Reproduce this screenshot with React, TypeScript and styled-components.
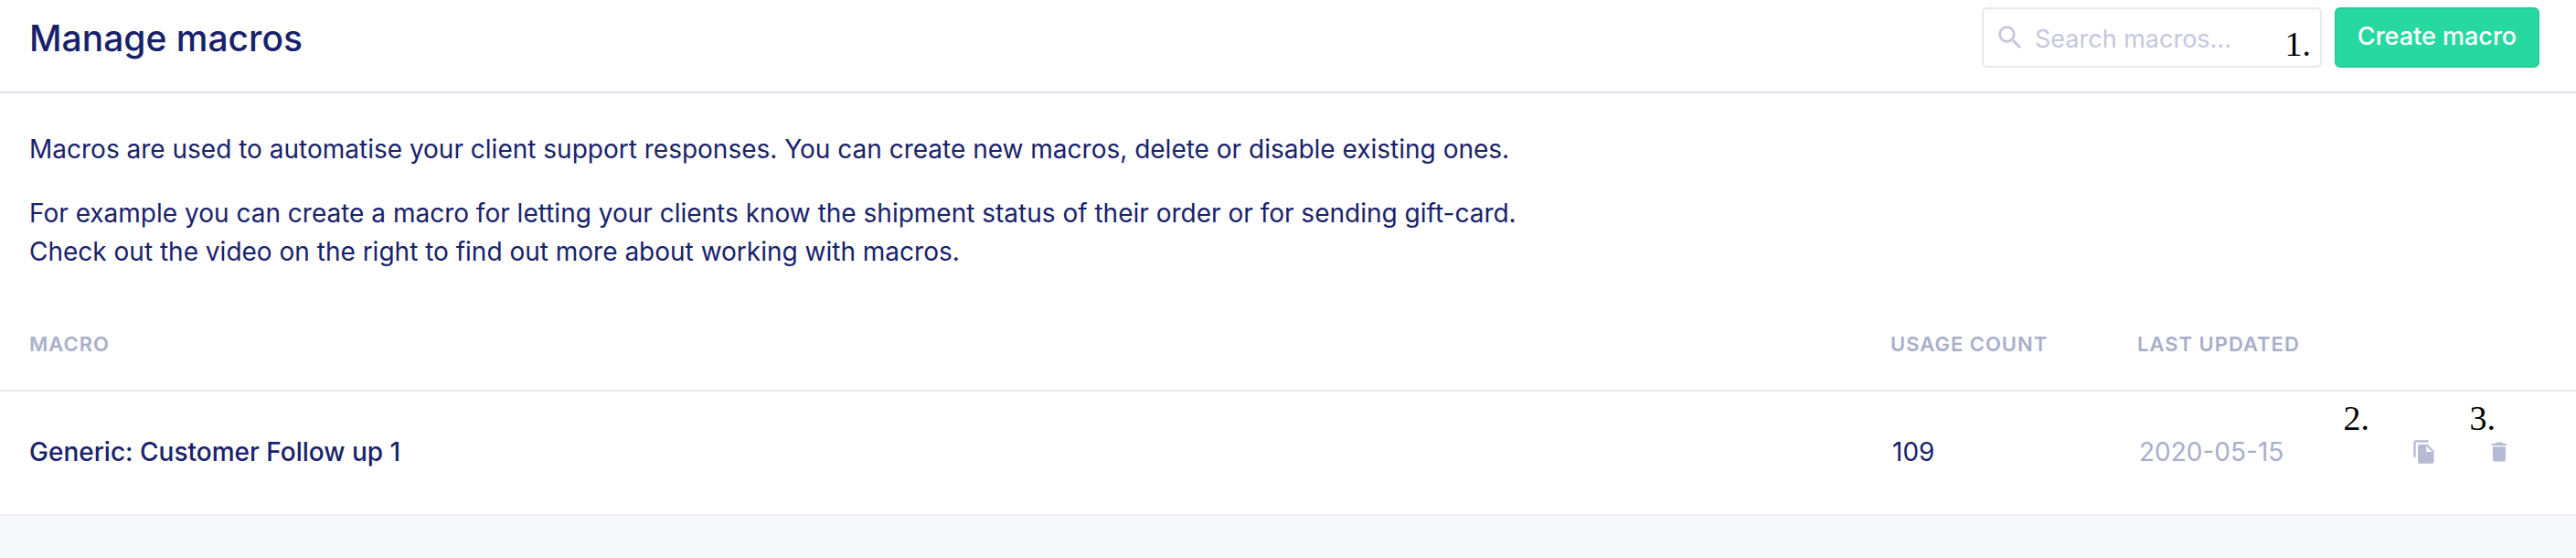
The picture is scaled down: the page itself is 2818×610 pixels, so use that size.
import React from "react";
import styled, { createGlobalStyle } from "styled-components";
import { MdDelete, MdFileCopy, MdSearch } from "react-icons/md";

const navy = "#18226b";
const muted = "#a9aecb";

const GlobalStyle = createGlobalStyle`
  *, *::before, *::after { box-sizing: border-box; }
  body {
    margin: 0;
    background: #f7f8fc;
    color: ${navy};
    font-family: Inter, "Liberation Sans", sans-serif;
    font-size: 28px;
    line-height: 42px;
  }
`;

const Panel = styled.main`
  background: #fff;
`;

const Header = styled.header`
  display: flex;
  align-items: center;
  justify-content: space-between;
  gap: 32px;
  padding: 8px 40px 26px 32px;
  border-bottom: 2px solid #e3e3f0;
`;

const Title = styled.h1`
  margin: 0;
  padding-top: 2px;
  font-size: 39px;
  line-height: 48px;
  font-weight: 500;
`;

const Tools = styled.div`
  display: flex;
  gap: 14px;
`;

const SearchBox = styled.label`
  position: relative;
  display: flex;
  align-items: center;
  gap: 10px;
  width: 372px;
  height: 66px;
  padding: 0 12px;
  border: 2px solid #e8e8ee;
  border-radius: 6px;
  color: #c5c7dc;
`;

const SearchInput = styled.input`
  flex: 1;
  min-width: 0;
  height: 100%;
  padding: 2px 0 0;
  border: 0;
  outline: 0;
  background: transparent;
  color: ${navy};
  font: inherit;
  font-size: 27px;
  &::placeholder {
    color: #c5c7dc;
    opacity: 1;
  }
`;

const CreateButton = styled.button`
  min-width: 224px;
  height: 66px;
  padding: 0 20px 2px;
  border: 2px solid #24cb94;
  border-radius: 6px;
  background: #27d9a1;
  color: #fff;
  font: inherit;
  font-size: 27px;
  font-weight: 500;
  white-space: nowrap;
`;

const Intro = styled.section`
  padding: 40px 32px 30px;
`;

const Paragraph = styled.p`
  margin: 0 0 28px;
  &:last-child { margin-bottom: 0; }
`;

const MacroTable = styled.table`
  width: 100%;
  table-layout: fixed;
  border-collapse: separate;
  border-spacing: 0;
`;

const Column = styled.col<{ $width?: number }>`
  width: ${(p) => (p.$width ? `${p.$width}px` : "auto")};
`;

const HeadCell = styled.th`
  height: 102px;
  padding: 0;
  border-bottom: 2px solid #e8e8ee;
  color: ${muted};
  font-size: 22px;
  font-weight: 600;
  letter-spacing: 1px;
  text-align: left;
  text-transform: uppercase;
  &:first-child { padding-left: 32px; }
`;

const Cell = styled.td<{ $muted?: boolean }>`
  height: 136px;
  padding: 0 0 2px 2px;
  border-bottom: 2px solid #efeff5;
  color: ${(p) => (p.$muted ? muted : navy)};
`;

const NameCell = styled.th`
  padding: 0 0 2px 32px;
  border-bottom: 2px solid #efeff5;
  font-weight: 500;
  text-align: left;
`;

const Actions = styled.div`
  display: flex;
  justify-content: flex-end;
  gap: 54px;
  padding-right: 70px;
`;

const IconButton = styled.button`
  position: relative;
  display: flex;
  padding: 0;
  border: 0;
  background: none;
  color: #b6bbd4;
`;

const Marker = styled.span<{ $right: number; $top: number }>`
  position: absolute;
  top: ${(p) => p.$top}px;
  right: ${(p) => p.$right}px;
  color: #000;
  font-family: "Liberation Serif", serif;
  font-size: 38px;
  line-height: 42px;
  pointer-events: none;
`;

const macros = [{ name: "Generic: Customer Follow up 1", count: 109, updated: "2020-05-15" }];

export default function App() {
  return (
    <>
      <GlobalStyle />
      <Panel>
        <Header>
          <Title>Manage macros</Title>
          <Tools>
            <SearchBox>
              <MdSearch size={34} aria-hidden />
              <SearchInput type="text" placeholder="Search macros..." aria-label="Search macros" />
              <Marker $right={10} $top={17}>1.</Marker>
            </SearchBox>
            <CreateButton type="button">Create macro</CreateButton>
          </Tools>
        </Header>
        <Intro>
          <Paragraph>
            Macros are used to automatise your client support responses. You can create new macros, delete or
            disable existing ones.
          </Paragraph>
          <Paragraph>
            For example you can create a macro for letting your clients know the shipment status of their order or
            for sending gift-card.
            <br />
            Check out the video on the right to find out more about working with macros.
          </Paragraph>
        </Intro>
        <MacroTable>
          <colgroup>
            <Column />
            <Column $width={270} />
            <Column $width={270} />
            <Column $width={210} />
          </colgroup>
          <thead>
            <tr>
              <HeadCell scope="col">Macro</HeadCell>
              <HeadCell scope="col">Usage count</HeadCell>
              <HeadCell scope="col">Last updated</HeadCell>
              <HeadCell as="td" />
            </tr>
          </thead>
          <tbody>
            {macros.map((macro) => (
              <tr key={macro.name}>
                <NameCell scope="row">{macro.name}</NameCell>
                <Cell>{macro.count}</Cell>
                <Cell $muted>{macro.updated}</Cell>
                <Cell>
                  <Actions>
                    <IconButton type="button" aria-label="Duplicate macro">
                      <MdFileCopy size={28} />
                      <Marker $right={74} $top={-44}>2.</Marker>
                    </IconButton>
                    <IconButton type="button" aria-label="Delete macro">
                      <MdDelete size={28} />
                      <Marker $right={18} $top={-44}>3.</Marker>
                    </IconButton>
                  </Actions>
                </Cell>
              </tr>
            ))}
          </tbody>
        </MacroTable>
      </Panel>
    </>
  );
}
